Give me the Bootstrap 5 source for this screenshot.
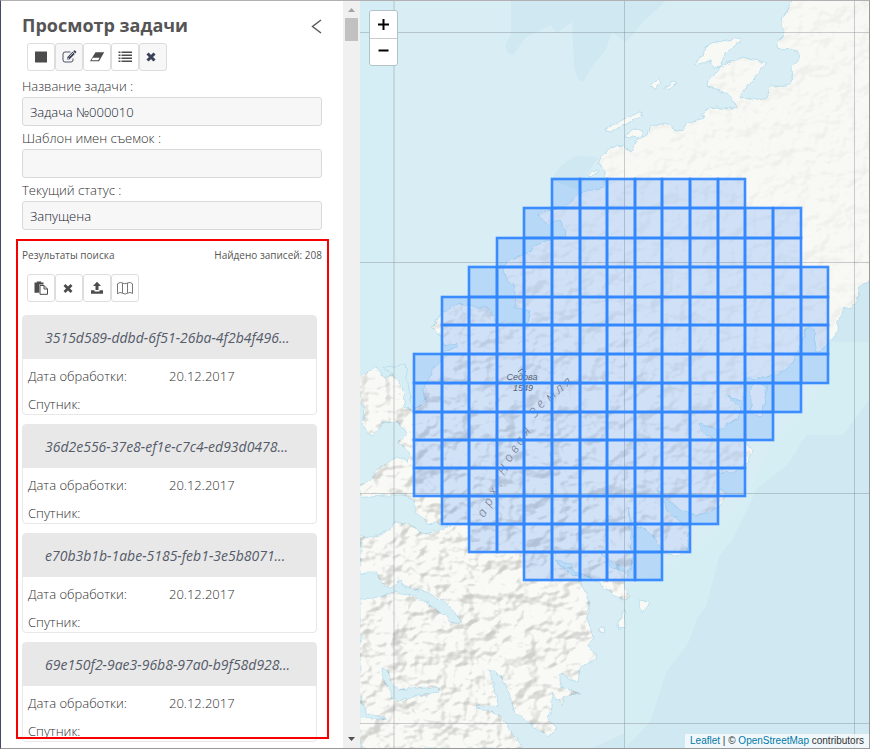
<!DOCTYPE html>
<html lang="ru">
<head>
<meta charset="utf-8">
<meta name="viewport" content="width=device-width, initial-scale=1">
<title>Просмотр задачи</title>
<link rel="stylesheet" href="https://cdn.jsdelivr.net/npm/bootstrap@5.3.0/dist/css/bootstrap.min.css">
<style>
  body { font-family: "Open Sans", "Noto Sans", sans-serif; font-size: 13px; font-weight: 300; line-height: 20px; color: #303030; }
  .app-frame { height: 100vh; border: 1px solid #999; border-top-color: #b3b0b3; border-left-color: #434a68; }
  .side-panel { flex: 0 0 342px; min-width: 0; padding: 12px 14px 9px 15px; }
  .inset { padding-left: 6px; padding-right: 7px; }
  .panel-title { font-size: 18px; line-height: 24px; font-weight: 700; margin: 0; color: #555; }
  .panel-head { height: 30px; }
  .tool { width: 28px; height: 28px; padding: 0; border: 1px solid #ddd; border-radius: 3px; background: #fff; color: #4c4c4c; }
  .tool.tinted { background: #f7f7f7; color: #3a4158; }
  .tool svg { width: 16px; height: 16px; display: block; margin: auto; }
  .tools { padding-left: 5px; }
  .fields { padding-top: 3px; }
  .field-label { display: block; line-height: 20px; padding-top: 2px; height: 23px; }
  .field-box { height: 29px; padding: 0 7px; font-size: 13px; font-weight: 300; color: #141a30; background: #f7f7f7; border: 1px solid #d9d9d9; border-radius: 3px; }
  .results { margin-top: 9px; padding: 6px 7px 0 6px; min-height: 0; }
  .results::after { content: ""; position: absolute; inset: 0; border: 2px solid #f70000; pointer-events: none; }
  .results-head { font-size: 10px; font-weight: 400; line-height: 20px; margin-bottom: 9px; color: #555; }
  .scene-list { padding-right: 5px; margin-top: 13px; display: grid; gap: 9px; }
  .scene { height: 100px; border: 1px solid #e8e8e8; border-radius: 4px; background: #fff; }
  .scene-id { height: 43px; line-height: 44px; padding: 0 22px; font-size: 14px; font-style: italic; font-weight: 400; color: #555b68; background: #e8e8e8; margin: 0; }
  .scene dl { margin: 0; padding: 3px 5px 0; display: grid; grid-template-columns: 141px 1fr; line-height: 28px; }
  .scene dt { font-weight: 300; }
  .scene dd { margin: 0; }
  .scroll-rail { flex: 0 0 17px; background: #f0f0f0; }
  .scroll-rail svg { width: 17px; height: 17px; display: block; }
  .scroll-thumb { width: 13px; height: 23px; background: #c1c1c1; margin: 0 auto; }
  .map-pane { background: #d9edf5; }
  .map-pane > svg { position: absolute; inset: 0; width: 100%; height: 100%; }
  .map-zoom { position: absolute; left: 9px; top: 9px; width: 29px; border: 1px solid #b2c2c9; border-radius: 3px; overflow: hidden; }
  .map-zoom button { display: block; width: 100%; height: 27px; padding: 0; border: 0; background: #fff; color: #000; }
  .map-zoom button + button { border-top: 1px solid #ccc; }
  .map-zoom svg { display: block; margin: auto; }
  .map-credit { position: absolute; right: 0; bottom: 0; padding: 0 5px; font: 10px/14px "Liberation Sans", Arial, sans-serif; color: #333; background: rgba(255,255,255,.7); }
  .map-credit a { color: #0078a8; text-decoration: none; }
</style>
<script src="https://cdn.jsdelivr.net/npm/bootstrap@5.3.0/dist/js/bootstrap.bundle.min.js"></script>
</head>
<body>
<div class="app-frame d-flex overflow-hidden">
  <aside class="side-panel d-flex flex-column bg-white">
    <div class="inset">
      <header class="panel-head d-flex justify-content-between">
        <h1 class="panel-title">Просмотр задачи</h1>
        <button class="btn p-0 border-0 lh-1 align-self-start" type="button" aria-label="Свернуть">
          <svg width="11" height="26" viewBox="0 0 11 26" fill="none" stroke="#555" stroke-width="1.4"><path d="M10 7 1.500 13.500 10 20"/></svg>
        </button>
      </header>
      <div class="tools d-flex">
        <button class="tool" type="button" aria-label="Остановить"><svg viewBox="0 0 16 16"><path fill="currentColor" d="M2 2.500h12v11H2z"/></svg></button>
        <button class="tool tinted" type="button" aria-label="Изменить"><svg viewBox="0 0 16 16"><path d="M9.500 3H4a2 2 0 0 0-2 2v6a2 2 0 0 0 2 2h6a2 2 0 0 0 2-2V9.500" fill="none" stroke="currentColor" stroke-width=".9"/><path d="M6.200 8.200 11.600 2.800 13.800 5 8.400 10.400H6.200zM12.200 2.200l.8-.8q.5-.4 1 0L15.100 2.600q.4.500 0 1l-.8.8z" fill="currentColor"/><path d="M7 8.700v1h1M8.500 7.500 12 4" stroke="#fff" stroke-width=".7" fill="none"/></svg></button>
        <button class="tool" type="button" aria-label="Очистить"><svg viewBox="0 0 16 16"><path d="M6.500 3.200H15.200L10 12.300H1z" fill="currentColor"/><path d="M3.900 8.700H10.600L9.200 11.300H2.500z" fill="#fff"/></svg></button>
        <button class="tool" type="button" aria-label="Список"><svg viewBox="0 0 16 16" fill="currentColor"><path d="M1.500 2.500h2v1.400h-2zM1.500 5.500h2v1.400h-2zM1.500 8.500h2v1.400h-2zM1.500 11.500h2v1.400h-2zM4.500 2.500h10.500v1.400h-10.500zM4.500 5.500h10.500v1.400h-10.500zM4.500 8.500h10.500v1.400h-10.500zM4.500 11.500h10.500v1.400h-10.500z"/></svg></button>
        <button class="tool tinted" type="button" aria-label="Закрыть"><svg viewBox="0 0 16 16"><path d="M2.500 4.500 9.500 11.500M9.500 4.500 2.500 11.500" stroke="currentColor" stroke-width="3"/></svg></button>
      </div>
      <div class="fields">
        <label class="field-label" for="taskName">Название задачи :</label>
        <input class="form-control field-box" id="taskName" type="text" value="Задача №000010">
        <label class="field-label" for="taskMask">Шаблон имен съемок :</label>
        <input class="form-control field-box" id="taskMask" type="text">
        <label class="field-label" for="taskState">Текущий статус :</label>
        <input class="form-control field-box" id="taskState" type="text" value="Запущена">
      </div>
    </div>

    <section class="results position-relative flex-grow-1">
      <div class="results-head d-flex justify-content-between"><span>Результаты поиска</span><span>Найдено записей: 208</span></div>
      <div class="tools d-flex">
        <button class="tool" type="button" aria-label="Вставить"><svg viewBox="0 0 16 16"><path d="M1.500 2.500h2.300V1.600h4.400v.9h2.300v2H6.300v8.300H1.500z" fill="currentColor"/><path d="M7 5.500h4L14.500 9v5.300H7zM11 5.500V9h3.500" fill="#fff" stroke="currentColor"/></svg></button>
        <button class="tool" type="button" aria-label="Удалить"><svg viewBox="0 0 16 16"><path d="M4.500 5 11.500 12M11.500 5 4.500 12" transform="translate(-1)" stroke="currentColor" stroke-width="2.800"/></svg></button>
        <button class="tool" type="button" aria-label="Выгрузить"><svg viewBox="0 0 16 16" fill="currentColor"><path d="M8 1.800 12 6H9.500v4h-3V6H4z"/><path d="M2 10.300h3.500v1.200h5v-1.200H14v3.500H2z"/></svg></button>
        <button class="tool" type="button" aria-label="На карте"><svg viewBox="0 0 16 16" fill="none" stroke="#777"><path d="M.5 3.800Q3.500 1.500 5.500 3t5 0 5 .8V13.500q-2.500-2-5-.3t-5 0-5 .5zM5.500 3v10.200M10.500 3v10.200"/></svg></button>
      </div>
      <div class="scene-list">
        <article class="scene"><h2 class="scene-id text-nowrap">3515d589-ddbd-6f51-26ba-4f2b4f496...</h2><dl><dt>Дата обработки:</dt><dd>20.12.2017</dd><dt>Спутник:</dt><dd></dd></dl></article>
        <article class="scene"><h2 class="scene-id text-nowrap">36d2e556-37e8-ef1e-c7c4-ed93d0478...</h2><dl><dt>Дата обработки:</dt><dd>20.12.2017</dd><dt>Спутник:</dt><dd></dd></dl></article>
        <article class="scene"><h2 class="scene-id text-nowrap">e70b3b1b-1abe-5185-feb1-3e5b8071...</h2><dl><dt>Дата обработки:</dt><dd>20.12.2017</dd><dt>Спутник:</dt><dd></dd></dl></article>
        <article class="scene"><h2 class="scene-id text-nowrap">69e150f2-9ae3-96b8-97a0-b9f58d928...</h2><dl><dt>Дата обработки:</dt><dd>20.12.2017</dd><dt>Спутник:</dt><dd></dd></dl></article>
      </div>
    </section>
  </aside>

  <div class="scroll-rail d-flex flex-column" aria-hidden="true">
    <svg viewBox="0 0 17 17"><path d="M5 11 8.500 7 12 11z" fill="#a3a3a3"/></svg>
    <div class="scroll-thumb"></div>
    <svg class="mt-auto" viewBox="0 0 17 17"><path d="M5 6 8.500 10 12 6z" fill="#505050"/></svg>
  </div>

  <main class="map-pane position-relative flex-grow-1 overflow-hidden">
    <svg viewBox="360 1 509 747" preserveAspectRatio="xMinYMin slice" role="img" aria-label="Карта">
      <defs>
        <filter id="coast" x="0" y="0" width="1" height="1"><feTurbulence type="fractalNoise" baseFrequency=".12" numOctaves="3" seed="4"/><feDisplacementMap in="SourceGraphic" scale="6" xChannelSelector="R" yChannelSelector="G"/></filter>
        <filter id="relief" x="0" y="0" width="1" height="1" color-interpolation-filters="sRGB">
          <feTurbulence type="fractalNoise" baseFrequency=".045 .055" numOctaves="3" seed="11"/>
          <feColorMatrix values="0 0 0 0 0  0 0 0 0 0  0 0 0 0 0  1.500 0 0 0 -.2"/>
          <feDiffuseLighting surfaceScale="9" diffuseConstant="1.350" lighting-color="#fff"><feDistantLight azimuth="225" elevation="56"/></feDiffuseLighting>
        </filter>
        <radialGradient id="hills" gradientUnits="userSpaceOnUse" cx="430" cy="620" r="430"><stop offset="0" stop-color="#fff" stop-opacity=".5"/><stop offset=".45" stop-color="#fff" stop-opacity=".4"/><stop offset="1" stop-color="#fff" stop-opacity=".1"/></radialGradient>
        <mask id="landMask" maskUnits="userSpaceOnUse" x="360" y="0" width="510" height="749" color-interpolation="sRGB"><rect x="360" width="510" height="749" fill="#000"/><g fill="url(#hills)" opacity=".36"><use href="#mainland"/></g><g fill="#000"><use href="#inlets"/></g></mask>
        <path id="mainland" d="M869 -5H797L790 5 783 17 781 27 784 31 777 47 780 50 795 49 800 57 792 67 793 80 787 85 770 86 768 97 753 100 740 97 763 67 765 62 753 60 743 57 727 63 708 80 707 87 720 90 730 97 737 107 730 109 720 108 706 109 702 113 705 118 687 123 683 129 677 130 665 123 650 127 648 135 637 140 633 150 630 152 623 147 617 145 607 150 598 162 604 170 603 187 580 193 563 207 548 210 537 215 547 224 560 220 566 230 565 237 543 242 527 252 507 262 503 270 508 280 515 287 515 308 530 310 527 323 497 323 493 315 487 307 477 307 460 303 443 312 432 327 440 335 444 345 457 343 455 348 443 352 440 362 430 370 432 375 423 390 425 402 412 410 405 406 405 390 397 373 393 373 385 378 375 367 360 378V749H523L503 720 497 712 477 709V706L498 705 493 683 488 669 497 672 507 687 515 713 530 723 548 737 557 728 547 718 552 710 552 693 562 705 563 697 580 693 560 687 560 673 578 682 580 667 590 663 597 655 588 647 593 637 587 617 590 603 580 580 557 563 600 583 617 598 625 600 630 598 624 583 633 563 632 553 628 507 633 537 637 527 647 530 665 552 678 557 688 552 690 530 667 510 657 490 667 500 683 512 700 515 720 507 727 493 718 487 717 472 733 473 747 463 752 450 743 440 717 440 707 435 697 423 717 430 737 420 740 407 727 395 743 402 747 377 767 378 782 372 792 363 800 347 807 328 815 328 814 345 817 353 830 342 837 332 838 323 843 307 850 309 860 295 858 287 869 282H875V-5z"/>
        <path id="inlets" d="M350 400 360 402 365 410 362 425 370 434 373 435 383 423 397 422 407 433 397 442 410 453 407 462 397 457 380 467 370 480 350 488zM350 497 387 495 400 494 413 500 417 513 427 523 450 526 433 532 423 534 410 523 397 523 383 533 367 538 350 530zM350 573H377L380 582 390 588 400 581 413 590 427 592 447 603 462 622 455 623 433 607 420 598 393 592 373 598 350 600zM382 668 387 670 390 680 398 690 438 687V692L417 695 400 702 392 698 390 688 382 677zM383 367 405 365 412 407 405 408 403 392 397 378zM350 696 364 706 368 714 388 718 370 720 350 710z"/>
      </defs>

      <rect x="360" width="34" height="749" fill="#d5eef5"/>
      <g fill="#cfe8f1">
        <path d="M511 0V35L505 45Q508 58 514 54L526 37 551 25 557 33 572 22 574 65Q578 86 584 80L594 64 605 51 612 32 626 42 643 22 667 0zM552 180Q560 162 577 156L598 157 578 190z"/>
        <path d="M869 260H858L838 323 832 342 855 343 875 400z"/>
        <path d="M869 400 843 435H806L787 465 757 488 733 538 719 556 706 606 697 618 688 643 666 672 650 722 590 749H869z"/>
      </g>
      <path d="M869 342H855L830 342 828 383 800 411 773 440 745 500 690 553 624 590V749L650 722 666 672 688 643 697 618 706 606 719 556 733 538 757 488 787 465 806 435H843L869 400z" fill="#d5eef4"/>

      <g filter="url(#coast)" stroke="#b7deec" stroke-width=".9">
        <use href="#mainland" fill="#f8f8f5"/>
        <g fill="#f8f8f5">
          <path d="M695 65 704 50 711 43 740 38V43L724 53 722 67 713 68 710 61zM650 88 658 79 661 83 654 89zM663 87 674 81 678 82 668 89zM604 130 616 124 640 111 642 117 628 123 610 132zM625 135 634 127 643 132 643 137 630 138zM588 176 593 170 598 171 596 175 590 178zM750 390 755 383 767 385 762 417 752 414zM637 600 649 601 647 606 643 613 639 607zM617 625 624 610 626 628 618 629zM600 627 604 627 603 632 599 631z"/>
        </g>
        <use href="#inlets" fill="#d8eef5"/>
        <g fill="#d8eef5"><path d="M555 560 570 563 580 577 572 575zM600 553 620 567 627 572 615 570z"/></g>
      </g>
      <g mask="url(#landMask)"><rect x="360" width="510" height="749" filter="url(#relief)"/></g>

      <g fill="none" stroke="#7c8288" stroke-opacity=".38"><path d="M624.500 0V749M854.500 0V749M360 32.500H870M360 262.500H870M360 493.500H870M360 723.500H870"/><path d="M394 0V749" stroke-width="2" stroke-opacity=".2"/></g>

      <g font-family="Noto Sans, sans-serif" font-style="italic" fill="#5d5752">
        <g font-family="Liberation Sans, sans-serif" font-size="9" text-anchor="middle"><text x="522" y="380">Седова</text><text x="523" y="391">1549</text></g>
        <path d="M518 372 522 369 526 372" fill="none" stroke="#5d5752"/>
        <g font-size="13" fill="#85766f">
          <text x="484 490 495 501" y="518 507 496 487" rotate="-60 -60 -58 -56">арх.</text>
          <text x="504 510 516 521 527" y="476 463 454 446 436" rotate="-56 -56 -56 -56 -52">Новая</text>
          <text x="535 541" y="418 409" rotate="-46 -44">Зе</text>
          <text x="550 559 567" y="402 394 387" rotate="-42 -38 -36">мля</text>
        </g>
      </g>
      <g id="footprints" fill="#3388ff" fill-opacity=".2" stroke="#3388ff" stroke-width="2.600" stroke-opacity=".95"></g>
    </svg>
    <div class="map-zoom">
      <button type="button" aria-label="Приблизить"><svg width="13" height="12"><path d="M6.500 0v11M1 5.500h11" stroke="#000" stroke-width="2"/></svg></button>
      <button type="button" aria-label="Отдалить"><svg width="13" height="12"><path d="M1.500 4.500h10" stroke="#000" stroke-width="2"/></svg></button>
    </div>
    <div class="map-credit"><a href="#">Leaflet</a> | © <a href="#">OpenStreetMap</a> contributors</div>
  </main>
</div>
<script>
  // Scene footprints: column edges, row edges, and first/last column of each row
  const cols = [414, 442, 469, 497, 524, 552, 580, 607, 635, 662, 690, 718, 745, 773, 801, 828];
  const rows = [179, 208, 238, 267, 297, 325, 354, 383, 412, 440, 468, 496, 524, 552, 580];
  const spans = [[5,12],[4,14],[3,14],[2,15],[1,15],[1,15],[0,15],[0,14],[0,13],[0,12],[0,12],[1,11],[2,10],[4,9]];
  const layer = document.getElementById('footprints');
  spans.forEach(([from, to], r) => {
    for (let c = from; c < to; c++) {
      const cell = document.createElementNS('http://www.w3.org/2000/svg', 'rect');
      cell.setAttribute('x', cols[c]);
      cell.setAttribute('y', rows[r]);
      cell.setAttribute('width', cols[c + 1] - cols[c]);
      cell.setAttribute('height', rows[r + 1] - rows[r]);
      layer.appendChild(cell);
    }
  });
</script>
</body>
</html>
